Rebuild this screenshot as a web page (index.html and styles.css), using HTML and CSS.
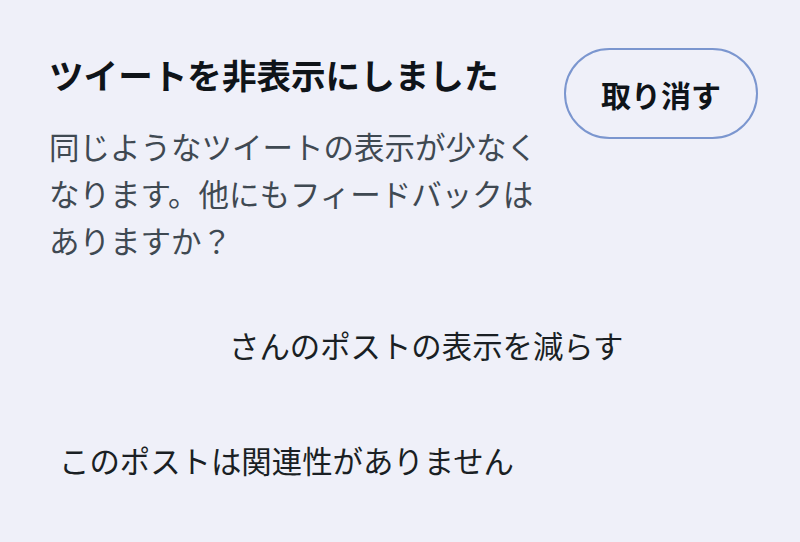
FILE: index.html
```html
<!DOCTYPE html>
<html lang="ja">
<head>
<meta charset="utf-8">
<link rel="stylesheet" href="styles.css">
</head>
<body>
<div class="page">
  <div class="header">
    <div class="info">
      <h1 class="title">ツイートを非表示にしました</h1>
      <p class="desc">同じようなツイートの表示が少なくなります。他にもフィードバックはありますか？</p>
    </div>
    <button class="undo">取り消す</button>
  </div>
  <div class="menu">
    <div class="item item-user"><span class="user"></span>さんのポストの表示を減らす</div>
    <div class="item item-irrelevant">このポストは関連性がありません</div>
  </div>
</div>
</body>
</html>
```
FILE: styles.css
```css
html, body {
  margin: 0;
  padding: 0;
  background: #eff0f9;
}
body {
  font-family: "Noto Sans CJK JP", "Noto Sans", sans-serif;
  width: 800px;
  height: 542px;
  overflow: hidden;
}
.page {
  padding: 48px 42px 0 49px;
}
.header {
  display: flex;
  justify-content: space-between;
  align-items: flex-start;
}
.info {
  width: 500px;
}
.title {
  margin: 6px 0 0 0;
  font-size: 34.6px;
  line-height: 40px;
  font-weight: 700;
  color: #0f1419;
}
.desc {
  margin: 29px 0 0 0;
  font-size: 30.5px;
  line-height: 47px;
  color: #3f4952;
}
.undo {
  width: 194px;
  height: 91px;
  border: 2px solid #7b96cf;
  border-radius: 46px;
  background: transparent;
  font-family: inherit;
  font-size: 30px;
  font-weight: 700;
  color: #0f1419;
  padding: 0;
}
.menu {
  margin-top: 58px;
}
.item {
  font-size: 30.4px;
  line-height: 47px;
  color: #1a1f24;
}
.item-user {
  padding-left: 180px;
}
.item-irrelevant {
  margin-top: 68px;
  padding-left: 10px;
}
```
